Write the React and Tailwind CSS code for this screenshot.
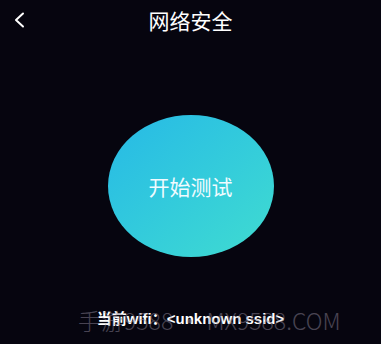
import React from "react";

export default function App() {
  return (
    <div
      className="relative w-[381px] h-[344px] bg-[#06050f] overflow-hidden flex flex-col"
      style={{ fontFamily: '"Noto Sans CJK SC", "Noto Sans", sans-serif' }}
    >
      <div className="relative h-[40px] flex items-center justify-center">
        <svg
          className="absolute left-[13px] top-[12px]"
          width="12"
          height="16"
          viewBox="0 0 12 16"
          fill="none"
        >
          <path d="M10 1.5 L3 8 L10 14.5" stroke="#ffffff" strokeWidth="2" strokeLinecap="round" strokeLinejoin="round" />
        </svg>
        <span className="text-[21px] leading-none text-white">网络安全</span>
      </div>
      <div className="flex justify-center pt-[75px]">
        <div className="w-[166px] h-[142px] rounded-[50%] bg-gradient-to-br from-[#27b9e6] to-[#40dcd0] flex items-center justify-center">
          <span className="text-[21px] leading-none text-[#f0fbff]">开始测试</span>
        </div>
      </div>
      <div className="flex justify-center pt-[54px]">
        <span
          className="text-[15px] leading-none text-white font-semibold"
          style={{ fontFamily: '"Liberation Sans", "Noto Sans CJK SC", sans-serif' }}
        >
          当前wifi：&lt;unknown ssid&gt;
        </span>
      </div>
      <div
        className="absolute left-[78px] top-[309px] text-[23px] leading-none text-[#8a8294] opacity-50 whitespace-nowrap pointer-events-none"
        style={{ fontFamily: '"Noto Sans CJK SC", "Noto Sans", sans-serif', fontWeight: 300 }}
      >
        手游9588 · MX9588.COM
      </div>
    </div>
  );
}
